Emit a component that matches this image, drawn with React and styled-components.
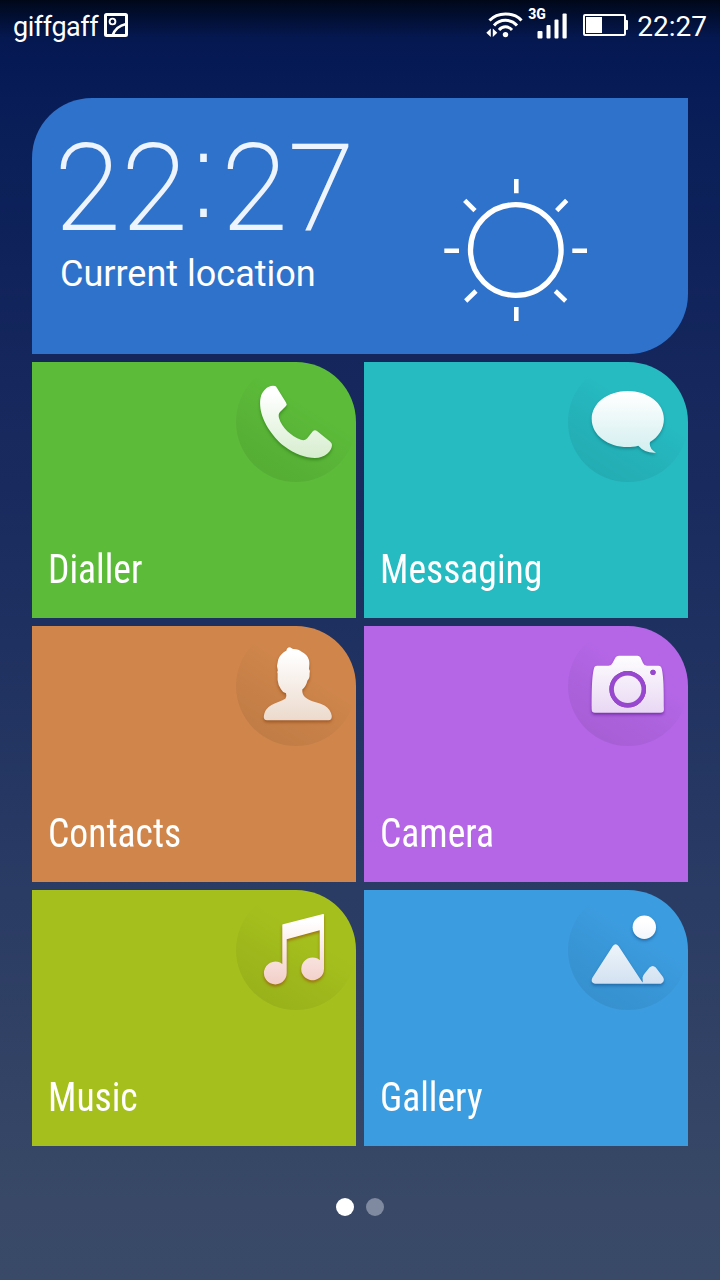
import React from 'react';
import styled, { createGlobalStyle } from 'styled-components';

const GlobalStyle = createGlobalStyle`
  * {
    box-sizing: border-box;
  }

  body {
    margin: 0;
    color: #ffffff;
    font-family: Roboto, 'Noto Sans', sans-serif;
  }

  svg {
    display: block;
    flex: none;
  }
`;

const Screen = styled.div`
  width: 720px;
  height: 1280px;
  overflow: hidden;
  display: flex;
  flex-direction: column;
  align-items: center;
  background: linear-gradient(
    #000818 0px,
    #020f34 18px,
    #051850 38px,
    #051955 60px,
    #081d57 100px,
    #14265c 355px,
    #1e3060 620px,
    #2a3b64 890px,
    #384866 1200px,
    #394968 1280px
  );
`;

const StatusBar = styled.header`
  width: 100%;
  height: 50px;
  padding: 0 13px;
  display: flex;
  justify-content: space-between;
  align-items: center;
`;

const StatusGroup = styled.div`
  display: flex;
  align-items: center;
`;

const StatusText = styled.span`
  font-size: ${({ $size }) => $size}px;
  line-height: 34px;
  letter-spacing: ${({ $spacing }) => $spacing || 0}px;
  padding-top: 3px;
`;

const Carrier = styled(StatusText)`
  margin-right: 6px;
`;

const Network = styled.div`
  display: flex;
  align-items: flex-start;
  height: 32px;
  margin: 0 16px 4px 4.5px;
`;

const NetworkType = styled.span`
  width: 9px;
  font-size: 14px;
  font-weight: 800;
  line-height: 14px;
  letter-spacing: -0.1px;
`;

const Clock = styled(StatusText)`
  margin-left: 9px;
`;

const Tiles = styled.main`
  width: 656px;
  margin-top: 48px;
  display: grid;
  grid-template-columns: 1fr 1fr;
  grid-auto-rows: 256px;
  gap: 8px;
`;

const ClockTile = styled.section`
  grid-column: 1 / -1;
  display: flex;
  border-radius: 60px 0;
  background: #2f72cc;
`;

const ClockText = styled.div`
  width: 412px;
  padding: 26px 0 0 23px;
`;

const Time = styled.div`
  display: flex;
  color: #edf4fd;
  font-size: 119px;
  font-weight: 100;
  line-height: 129px;
  letter-spacing: 1.8px;
  -webkit-text-stroke: 2px #edf4fd;
  white-space: nowrap;
`;

const Colon = styled.span`
  width: 33px;
  height: 100px;
  display: flex;
  justify-content: center;
  padding-right: 4px;
  font-family: 'DejaVu Sans', sans-serif;
  font-size: 132px;
  font-weight: 200;
  line-height: 95px;
  letter-spacing: 0;
  -webkit-text-stroke-width: 0;
`;

const Location = styled.div`
  padding-left: 5px;
  font-size: 36px;
  line-height: 44px;
  margin-top: -1px;
`;

const Weather = styled.div`
  padding-top: 80px;
`;

const AppTile = styled.section`
  display: flex;
  flex-direction: column;
  justify-content: space-between;
  border-top-right-radius: 60px;
  background: ${({ $color }) => $color};
`;

const Badge = styled.div`
  width: 120px;
  height: 120px;
  align-self: flex-end;
  border-radius: 50%;
  background: linear-gradient(32deg, rgba(0, 0, 0, 0.075) 12%, rgba(0, 0, 0, 0.05) 32%, transparent 62%);

  svg {
    filter: drop-shadow(0 2px 1.5px ${({ $shadow }) => $shadow});
  }
`;

const Label = styled.span`
  align-self: flex-start;
  margin: 0 0 24px 16px;
  font-family: 'Roboto Condensed', Roboto, sans-serif;
  font-size: 40px;
  font-stretch: 75%;
  font-weight: 450;
  line-height: 48px;
  transform: scaleX(0.94);
  transform-origin: left;
`;

const Pager = styled.nav`
  display: flex;
  gap: 12px;
  margin-top: 52px;
`;

const Dot = styled.span`
  width: 18px;
  height: 18px;
  border-radius: 50%;
  background: ${({ $active }) => ($active ? '#ffffff' : '#7f89a0')};
`;

const PictureIcon = () => (
  <svg width="24" height="24" fill="none" stroke="#fff">
    <rect x="1.500" y="1.500" width="21" height="21" rx="1" strokeWidth="3" />
    <circle cx="8.500" cy="8.500" r="2.900" strokeWidth="1.900" />
    <path d="M8.500 22.500C10.500 17 15 12.500 22 11" strokeWidth="2.500" />
  </svg>
);

const WifiIcon = () => (
  <svg width="38" height="28" fill="none" stroke="#fff" strokeWidth="3">
    <path d="M3.500 9.500C11.500 0.800 27.500 0.800 35.500 9.500" />
    <path d="M8 14.500C14 7.600 25 7.600 31 14.500" />
    <path d="M13 19C16.500 14.800 22.500 14.800 26 19" />
    <circle cx="19.500" cy="23.600" r="2.700" fill="#fff" stroke="none" />
    <path d="M4.800 17.500V26L0.300 21.800ZM6.800 17.500V26L11.300 21.800Z" fill="#fff" stroke="none" />
  </svg>
);

const SignalIcon = () => (
  <svg width="30" height="32" fill="#fff">
    <rect x="0.500" y="24" width="5" height="7.500" rx="1" />
    <rect x="9.500" y="18" width="4" height="13.500" rx="1" />
    <rect x="17.500" y="12.500" width="4" height="19" rx="1" />
    <rect x="25.500" y="6.500" width="4.200" height="25" rx="1" />
  </svg>
);

const BatteryIcon = () => (
  <svg width="45" height="22" fill="#fff">
    <rect x="1" y="1" width="41" height="20" rx="1" fill="none" stroke="#fff" strokeWidth="2" />
    <rect x="3" y="3" width="16" height="16" />
    <rect x="42" y="6" width="3" height="10" rx="1" />
  </svg>
);

const SunIcon = () => (
  <svg width="144" height="144" fill="none" stroke="#fff" strokeWidth="4.600">
    <circle cx="71.800" cy="72" r="45.300" strokeWidth="5.300" />
    <path d="M72.300 1V15.300M72.300 129V143M0.300 72.700H15M128.300 72.700H143" />
    <path d="M20.700 22.300L31 32.700M122.700 22.300L112.700 32.700M21.700 123L32 113M121.700 123L111.300 113" />
  </svg>
);

// Glyphs are drawn on a 120 x 120 badge and fade towards the bottom.
const Glyph = ({ id, end, top = 0, children }) => (
  <svg width="120" height="120" viewBox={`0 ${top} 120 120`} fill={`url(#${id})`}>
    <defs>
      <linearGradient id={id} gradientUnits="userSpaceOnUse" x1="0" y1="24" x2="0" y2="98">
        <stop offset="0.1" stopColor="#fff" />
        <stop offset="1" stopColor={end} />
      </linearGradient>
    </defs>
    {children}
  </svg>
);

const apps = [
  {
    name: 'Dialler',
    color: '#5cbb39',
    shadow: 'rgba(25, 100, 5, 0.5)',
    end: '#d5edcd',
    glyph: (
      <path d="M39 24Q33.500 23 29 27.500C24 32.500 24 38 24.200 44C25 58 36 74.500 48 84C58 92 70 96 79 96C89 96 96 89 96 83Q96 81 94 79.500L81 69Q79 67.500 77 69L71 76.500Q68.500 79 65 77.800C55 74 46 66 43 56Q42 52 44 50L50 44Q51.500 42.500 50 40.500L41 26Q40 24 39 24Z" />
    ),
  },
  {
    name: 'Messaging',
    color: '#26bac1',
    shadow: 'rgba(0, 90, 100, 0.45)',
    end: '#cdecee',
    glyph: (
      <path d="M59.700 29C79.700 29 95.900 41 95.900 57C95.900 66.500 90.500 75 82 80Q80.500 86.500 88 90.700Q77 91.500 70.300 83.800C66.500 84.800 63 85.100 59.700 85.100C39.700 85.100 23.700 73 23.700 57C23.700 41 39.700 29 59.700 29Z" />
    ),
  },
  {
    name: 'Contacts',
    color: '#d0864b',
    shadow: 'rgba(130, 55, 5, 0.55)',
    end: '#ecdacd',
    top: 4,
    glyph: (
      <path d="M50.500 28.500Q50.500 25.500 54 25.300L57 27Q62.500 26.800 66 30C71 32.500 73.700 37 73.400 42L73 47Q74.500 48.500 73.600 51.500Q73.800 56.500 71.500 58.500C70.500 63 68.500 65.500 66.300 67.500Q66 73 69.500 75.500C75 80 83 80.500 88.500 83.500Q94.500 87 95.800 94Q95.800 98.300 92.500 98.300H31Q27.500 98.300 27.800 94Q29 86.500 35.500 83C40 80.500 46 79 49.500 76.500Q51 74.500 50 71.200Q46.500 70.500 44.800 67Q42 63 41.600 58V51.500Q40.800 50 41.800 48.500Q40.200 44 41.800 39.500C43 34 46 31 50.500 28.500Z" />
    ),
  },
  {
    name: 'Camera',
    color: '#b466e6',
    shadow: 'rgba(90, 15, 145, 0.6)',
    end: '#e6d3f2',
    top: 4,
    glyph: (
      <>
        <path
          fillRule="evenodd"
          d="M29 43.700H40.500Q43.500 43.500 44.500 41L47.500 35.500Q48.500 33.700 51 33.700H69.500Q71.500 33.700 72.500 35.500L75 41Q76 43.700 79 43.700H90.500Q93 43.700 93.800 47C95.500 55 95.900 65 95.900 87.500Q95.900 90.700 92.500 90.700H27Q23.700 90.700 23.700 87.500C23.700 65 24 55 25.800 47Q26.500 43.700 29 43.700ZM59.700 49A18.300 18.300 0 1 0 59.700 85.600A18.300 18.300 0 1 0 59.700 49ZM85 47.700A2.600 2.600 0 1 0 85 52.900A2.600 2.600 0 1 0 85 47.700Z"
        />
        <path
          fill="#9848cf"
          fillRule="evenodd"
          d="M59.700 49A18.300 18.300 0 1 0 59.700 85.600A18.300 18.300 0 1 0 59.700 49ZM59.700 53.500A13.800 13.800 0 1 1 59.700 81.100A13.800 13.800 0 1 1 59.700 53.500Z"
        />
        <circle cx="59.700" cy="67.300" r="13.800" />
        <circle cx="85" cy="50.300" r="2.600" fill="#9848cf" />
      </>
    ),
  },
  {
    name: 'Music',
    color: '#a5c01d',
    shadow: 'rgba(150, 75, 0, 0.65)',
    end: '#f2cbc4',
    glyph: (
      <path d="M46.300 35Q46.300 34.500 47 34.300L87 24Q88 23.800 88 24.800V79A11.400 11.400 0 1 1 83.700 70V40.300L50.700 49.300V83A11.400 11.400 0 1 1 46.300 74Z" />
    ),
  },
  {
    name: 'Gallery',
    color: '#3b9cdf',
    shadow: 'rgba(10, 70, 130, 0.5)',
    end: '#cfdff0',
    glyph: (
      <>
        <circle cx="76.300" cy="37.300" r="11.700" />
        <path d="M44.800 56Q47.600 52.500 50.500 56L73.500 91L74.800 92.400L74.500 87.500Q75.300 84.500 77 83L81.500 77.500Q84.700 74.500 87.800 77.500L95 87Q97.500 91.500 93 93.700H27Q22 92.500 24.500 87.500Z" />
      </>
    ),
  },
];

const App = () => (
  <>
    <GlobalStyle />
    <Screen>
      <StatusBar>
        <StatusGroup>
          <Carrier $size={27} $spacing={-0.45}>giffgaff</Carrier>
          <PictureIcon />
        </StatusGroup>
        <StatusGroup>
          <WifiIcon />
          <Network>
            <NetworkType>3G</NetworkType>
            <SignalIcon />
          </Network>
          <BatteryIcon />
          <Clock $size={28}>22:27</Clock>
        </StatusGroup>
      </StatusBar>
      <Tiles>
        <ClockTile>
          <ClockText>
            <Time>
              <span>22</span>
              <Colon>:</Colon>
              <span>27</span>
            </Time>
            <Location>Current location</Location>
          </ClockText>
          <Weather>
            <SunIcon />
          </Weather>
        </ClockTile>
        {apps.map(({ name, color, shadow, end, top, glyph }) => (
          <AppTile key={name} $color={color}>
            <Badge $shadow={shadow}>
              <Glyph id={`fade-${name}`} end={end} top={top}>{glyph}</Glyph>
            </Badge>
            <Label>{name}</Label>
          </AppTile>
        ))}
      </Tiles>
      <Pager>
        <Dot $active />
        <Dot />
      </Pager>
    </Screen>
  </>
);

export default App;
